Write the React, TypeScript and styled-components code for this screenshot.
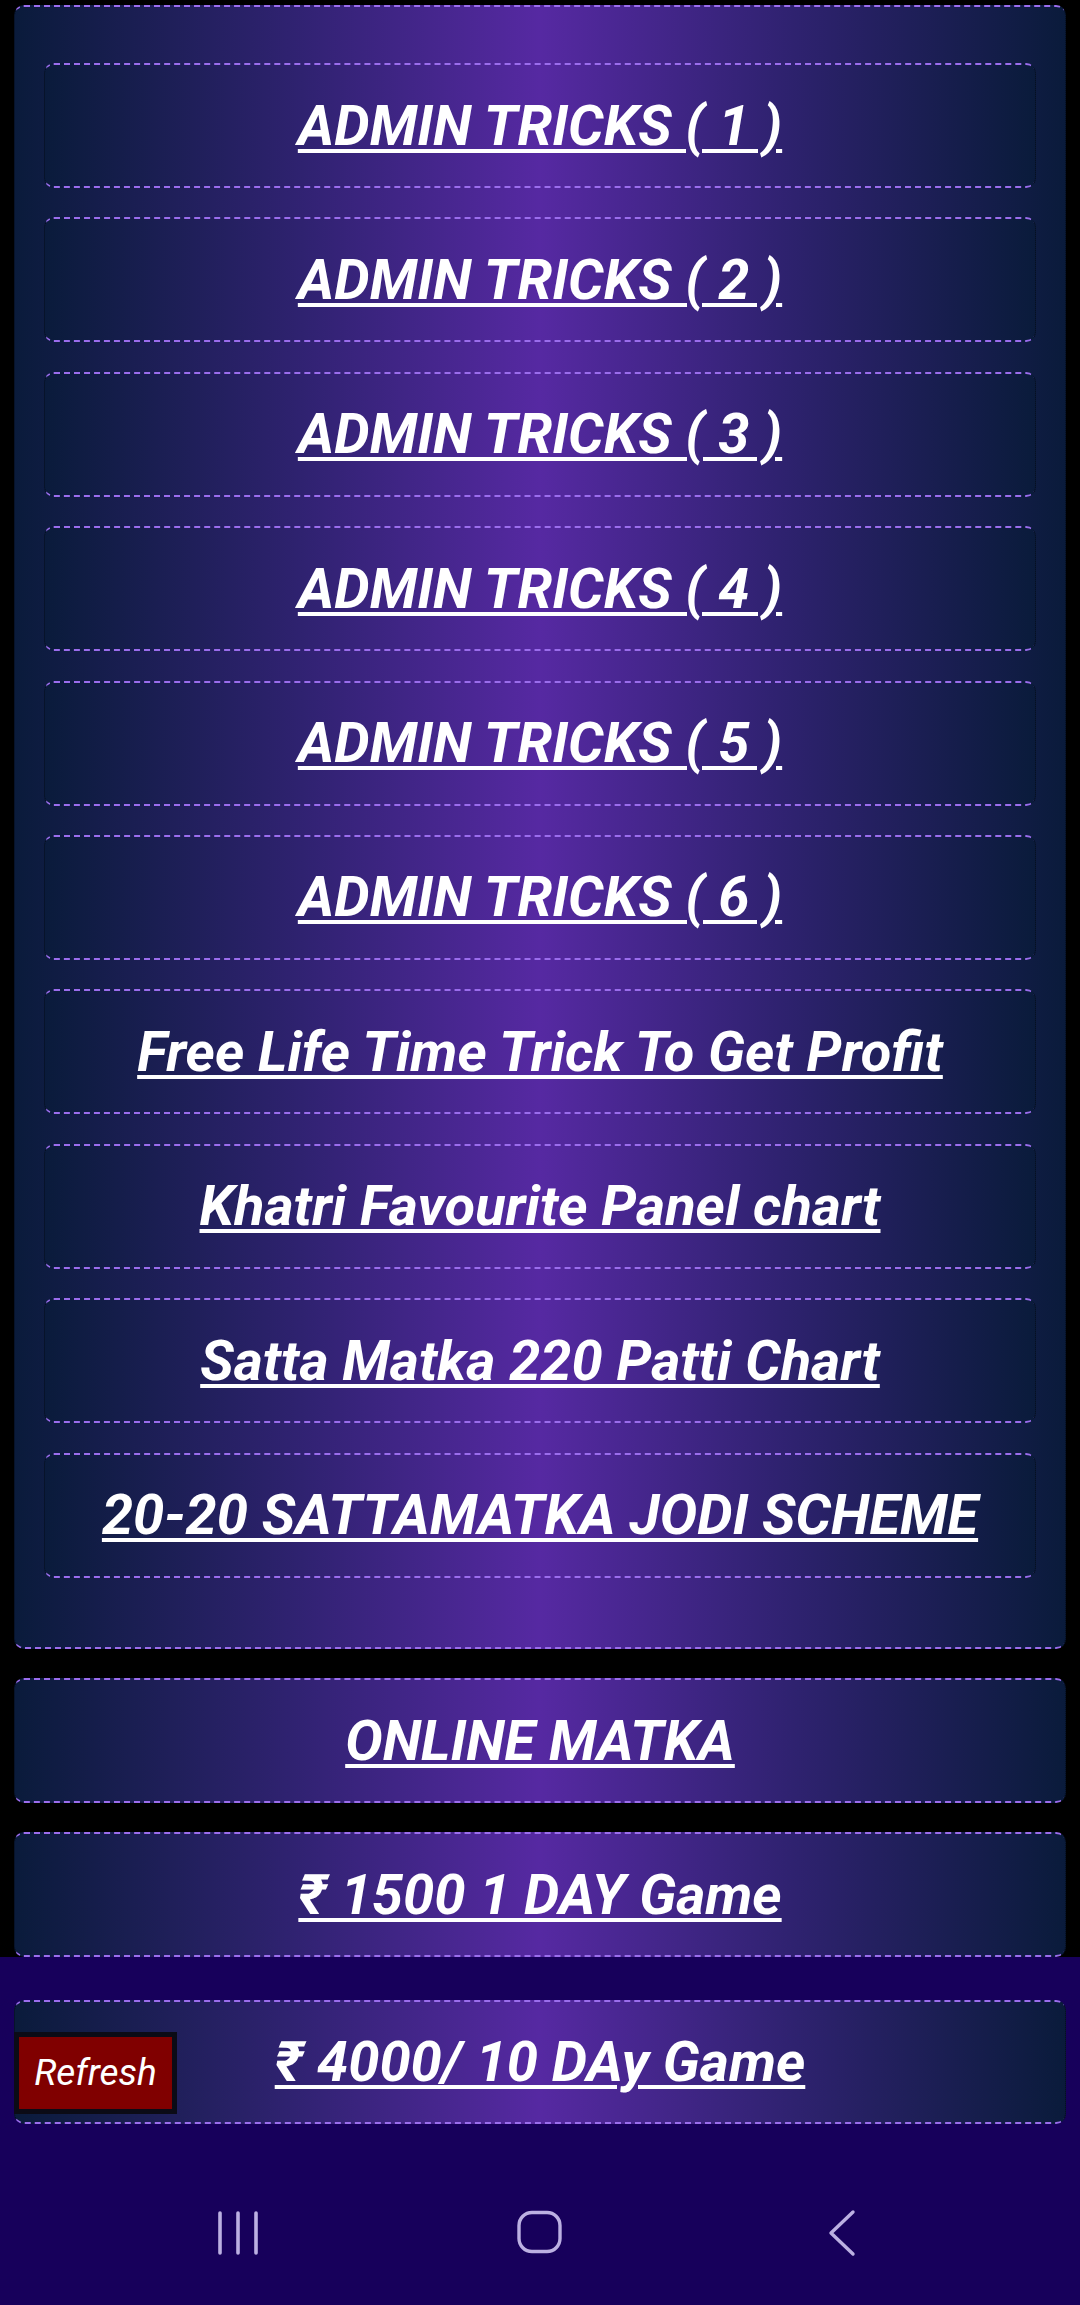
import React from "react";
import styled, { createGlobalStyle } from "styled-components";

const GlobalStyle = createGlobalStyle`
  html, body {
    margin: 0;
    padding: 0;
    background: #000;
  }
  body {
    width: 1080px;
    font-family: Roboto, "Liberation Sans", sans-serif;
  }
  #root {
    width: 1080px;
  }
`;

const cardGradient =
  "linear-gradient(90deg, #0a1b3b 0%, #2f2270 26%, #5629a2 50%, #2f2270 74%, #0a1b3b 100%)";

const Page = styled.div`
  display: flex;
  flex-direction: column;
  width: 1080px;
  height: 2305px;
  overflow: hidden;
  background: #000;
`;

const Main = styled.main`
  display: flex;
  flex-direction: column;
  gap: 29.15px;
  padding: 5px 14px 0;
`;

const dashedEdges = `
  border-top: 2px dashed #9b6ded;
  border-bottom: 2px dashed #9b6ded;
  border-left: 1px dotted rgba(0, 0, 0, 0.55);
  border-right: 1px dotted rgba(0, 0, 0, 0.55);
  border-radius: 10px;
  background: ${cardGradient};
  box-sizing: border-box;
`;

const Panel = styled.section`
  ${dashedEdges}
  display: flex;
  flex-direction: column;
  gap: 29.4px;
  height: 1644px;
  padding: 56px 29px 0;
`;

const LinkCard = styled.div<{ $h?: number }>`
  ${dashedEdges}
  position: relative;
  display: flex;
  align-items: center;
  justify-content: center;
  height: ${(p) => p.$h ?? 125}px;
  flex-shrink: 0;
`;

const LinkText = styled.a`
  color: #fff;
  font-family: Roboto, "Liberation Sans", sans-serif;
  font-weight: 700;
  font-style: italic;
  font-size: 56px;
  line-height: 1;
  text-decoration: underline;
  text-decoration-thickness: 4px;
  text-underline-offset: 4px;
  white-space: nowrap;
  cursor: pointer;
`;

const Footer = styled.footer`
  box-sizing: border-box;
  height: 203.7px;
  padding: 42.7px 14px 0;
  background: #17005b;
`;

const RefreshButton = styled.button`
  position: absolute;
  left: -1px;
  top: 30px;
  width: 163px;
  height: 82px;
  box-sizing: border-box;
  border: 5px solid #0b0b16;
  background: #800000;
  color: #fff;
  font-family: Roboto, "Liberation Sans", sans-serif;
  font-style: italic;
  font-weight: 400;
  font-size: 37px;
  padding: 0;
  cursor: pointer;
`;

const NavBar = styled.nav`
  display: flex;
  justify-content: center;
  align-items: center;
  height: 144px;
  background: #17005b;
  flex-shrink: 0;
`;

const NavSlot = styled.div`
  width: 302px;
  display: flex;
  justify-content: center;
  align-items: center;
  color: #bcb0e2;
`;

const tricks = [1, 2, 3, 4, 5, 6].map((n) => `ADMIN TRICKS ( ${n} )`);
const extra = [
  "Free Life Time Trick To Get Profit",
  "Khatri Favourite Panel chart",
  "Satta Matka 220 Patti Chart",
  "20-20 SATTAMATKA JODI SCHEME",
];

export default function App() {
  return (
    <>
      <GlobalStyle />
      <Page>
        <Main>
          <Panel>
            {[...tricks, ...extra].map((t) => (
              <LinkCard key={t}>
                <LinkText>{t}</LinkText>
              </LinkCard>
            ))}
          </Panel>
          <LinkCard>
            <LinkText>ONLINE MATKA</LinkText>
          </LinkCard>
          <LinkCard>
            <LinkText>₹ 1500 1 DAY Game</LinkText>
          </LinkCard>
        </Main>
        <Footer>
          <LinkCard $h={124}>
            <LinkText>₹ 4000/ 10 DAy Game</LinkText>
            <RefreshButton>Refresh</RefreshButton>
          </LinkCard>
        </Footer>
        <NavBar>
          <NavSlot>
            <svg width="44" height="46" viewBox="0 0 44 46" fill="none" stroke="currentColor" strokeWidth="3.6" strokeLinecap="round">
              <line x1="4" y1="3" x2="4" y2="43" />
              <line x1="22" y1="3" x2="22" y2="43" />
              <line x1="40" y1="3" x2="40" y2="43" />
            </svg>
          </NavSlot>
          <NavSlot>
            <svg width="48" height="46" viewBox="0 0 48 46" fill="none" stroke="currentColor" strokeWidth="3.4">
              <rect x="3" y="2.5" width="41" height="39" rx="13" />
            </svg>
          </NavSlot>
          <NavSlot>
            <svg width="30" height="48" viewBox="0 0 30 48" fill="none" stroke="currentColor" strokeWidth="3.4" strokeLinecap="round" strokeLinejoin="round">
              <polyline points="26,3 4,24 26,45" />
            </svg>
          </NavSlot>
        </NavBar>
      </Page>
    </>
  );
}
